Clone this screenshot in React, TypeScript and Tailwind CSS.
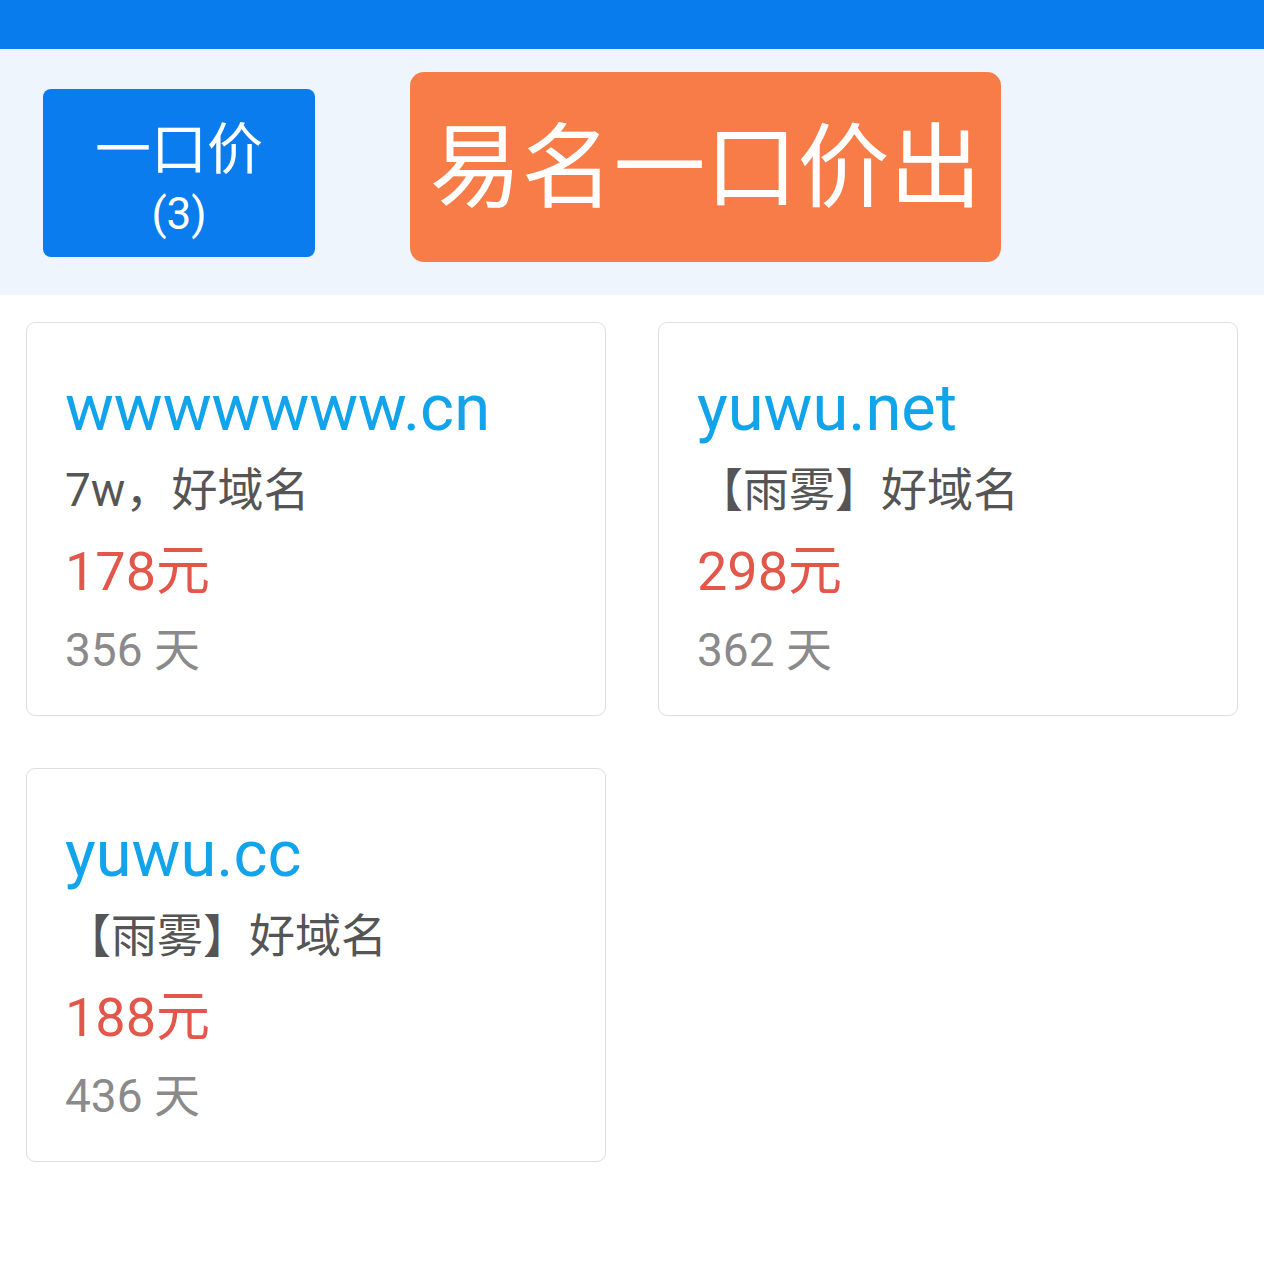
import React from "react";

const items = [
  { domain: "wwwwwww.cn", desc: "7w，好域名", price: "178元", days: "356 天" },
  { domain: "yuwu.net", desc: "【雨雾】好域名", price: "298元", days: "362 天" },
  { domain: "yuwu.cc", desc: "【雨雾】好域名", price: "188元", days: "436 天" },
];

const font = { fontFamily: 'Roboto, "Noto Sans CJK SC", sans-serif' };

export default function App() {
  return (
    <div className="w-[1264px] min-h-[1264px] bg-white" style={font}>
      <div className="h-[49px] bg-[#087ced]" />
      <div className="h-[246px] bg-[#eef5fd] flex items-start">
        <div className="ml-[43px] mt-[40px] w-[272px] h-[168px] rounded-[8px] bg-[#0a7ced] flex flex-col items-center justify-center text-white">
          <div className="text-[56px] leading-[64px] mt-[12px]">一口价</div>
          <div className="text-[44px] leading-[52px] mt-[6px]">(3)</div>
        </div>
        <div className="ml-[95px] mt-[23px] w-[591px] h-[190px] rounded-[14px] bg-[#f87c48] flex items-center justify-center text-white text-[92px] leading-none">
          <span className="mt-[4px]">易名一口价出</span>
        </div>
      </div>
      <div className="grid grid-cols-2 gap-x-[52px] gap-y-[52px] px-[26px] pt-[27px]">
        {items.map((it) => (
          <div
            key={it.domain}
            className="h-[394px] border border-[#dedede] rounded-[9px] pl-[38px] pt-[45px]"
          >
            <div className="text-[65px] leading-[80px] text-[#12a4ea]">{it.domain}</div>
            <div className="text-[46px] leading-[80px] text-[#555555] mt-[2px]">{it.desc}</div>
            <div className="text-[54px] leading-[80px] text-[#e2574a] mt-[2px]">{it.price}</div>
            <div className="text-[46px] leading-[80px] text-[#8a8a8a] -mt-[2px]">{it.days}</div>
          </div>
        ))}
      </div>
    </div>
  );
}
